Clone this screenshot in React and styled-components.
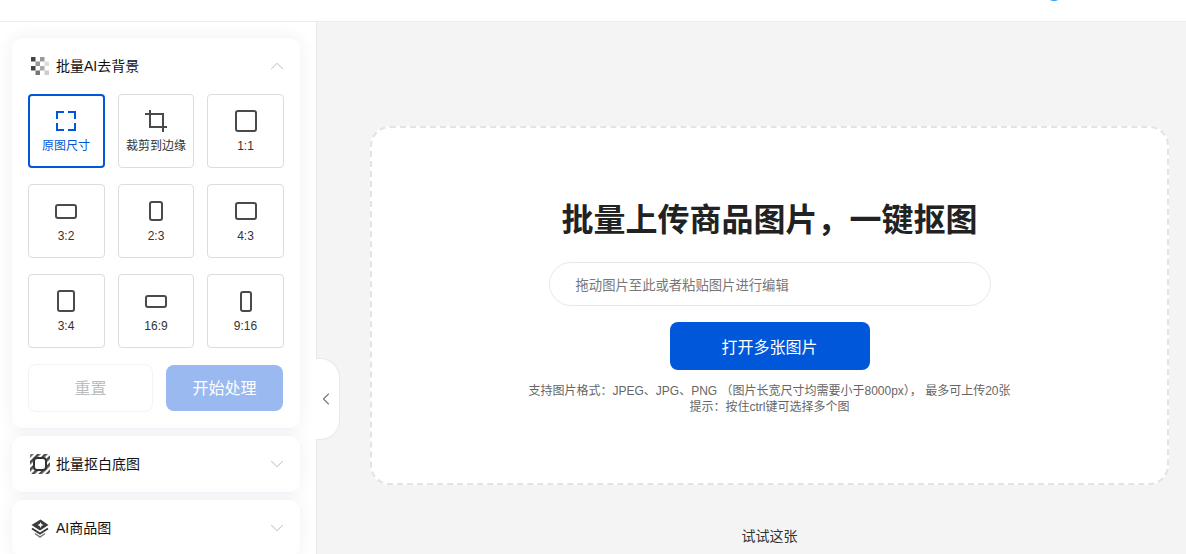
import React from 'react';
import styled, { createGlobalStyle } from 'styled-components';
import { ChevronUp, ChevronDown, ChevronLeft } from 'lucide-react';

const GlobalStyle = createGlobalStyle`
  html, body {
    margin: 0;
    height: 100%;
    overflow: hidden;
    background: #f4f4f4;
    font-family: "Liberation Sans", "Noto Sans CJK SC", sans-serif;
  }
  * { box-sizing: border-box; }
`;

const Page = styled.div`
  height: 100vh;
  display: flex;
  flex-direction: column;
  overflow: hidden;
`;

const Header = styled.header`
  height: 22px;
  flex: none;
  display: flex;
  justify-content: flex-end;
  padding-right: 123px;
  background: #fff;
  border-bottom: 1px solid #ececec;
  overflow: hidden;
`;

const Avatar = styled.span`
  width: 18px;
  height: 18px;
  margin-top: -17px;
  border-radius: 50%;
  background: #2f9bf4;
`;

const Body = styled.div`
  flex: 1;
  display: flex;
  min-height: 0;
`;

const Sidebar = styled.aside`
  position: relative;
  width: 317px;
  flex: none;
  display: flex;
  flex-direction: column;
  gap: 8px;
  padding: 16px 16px 0 12px;
  background: #fff;
  border-right: 1px solid #e9e9e9;
`;

const Card = styled.section`
  flex: none;
  background: #fff;
  border-radius: 10px;
  box-shadow: 0 0 16px rgba(40, 50, 120, 0.08);
  padding: ${(p) => (p.$open ? '0 16px 16px' : '0 16px')};
`;

const CardHead = styled.div`
  height: 56px;
  display: flex;
  align-items: center;
  gap: 6px;
  padding-left: 2px;
`;

const HeadIcon = styled.span`
  width: 20px;
  display: flex;
  justify-content: center;
`;

const CardTitle = styled.span`
  flex: 1;
  font-size: 14px;
  line-height: 20px;
  color: #111;
`;

const Arrow = styled.span`
  display: flex;
  color: #b4b4b4;
  margin-right: -4px;
`;

const Grid = styled.div`
  display: grid;
  grid-template-columns: 77px 76px 77px;
  grid-auto-rows: 74px;
  column-gap: 13px;
  row-gap: 16px;

  & > :nth-child(3n + 1) {
    padding-right: 1px;
  }
`;

const Cell = styled.div`
  display: flex;
  flex-direction: column;
  align-items: center;
  border-radius: 4px;
  border: ${(p) => (p.$active ? '2px solid #0057d9' : '1px solid #dcdcdc')};
  padding-top: ${(p) => (p.$active ? '13px' : '14px')};
  color: ${(p) => (p.$active ? '#0057d9' : '#333')};
`;

const IconSlot = styled.div`
  height: 24px;
  display: flex;
  align-items: center;
  justify-content: center;
`;

const Shape = styled.span`
  display: block;
  width: ${(p) => p.$w}px;
  height: ${(p) => p.$h}px;
  border: 2px solid #4a4a4a;
  border-radius: 3px;
`;

const CellLabel = styled.span`
  margin-top: 5px;
  font-size: 12px;
  line-height: 16px;
`;

const Actions = styled.div`
  display: flex;
  gap: 13px;
  margin-top: 16px;
`;

const ResetButton = styled.button`
  width: 125px;
  height: 48px;
  padding: 0 0 2px;
  font: inherit;
  font-size: 16px;
  color: #bdbdbd;
  background: #fff;
  border: 1px solid #f3f3f3;
  border-radius: 8px;
`;

const StartButton = styled.button`
  width: 117px;
  height: 46px;
  margin-top: 1px;
  padding: 0 0 2px;
  font: inherit;
  font-size: 16px;
  color: #fff;
  background: #99b9f0;
  border: 0;
  border-radius: 8px;
`;

const Collapse = styled.div`
  position: absolute;
  left: 316px;
  top: 336px;
  width: 24px;
  height: 82px;
  display: flex;
  align-items: center;
  justify-content: center;
  padding-right: 3px;
  background: #fff;
  border: 1px solid #e9e9e9;
  border-left: 0;
  border-radius: 0 20px 20px 0;
  color: #777;
`;

const Main = styled.main`
  flex: 1;
  display: flex;
  flex-direction: column;
  align-items: center;
  padding: 104px 17px 0 53px;
  background: #f4f4f4;
`;

const DropZone = styled.div`
  width: 100%;
  height: 359px;
  flex: none;
  display: flex;
  flex-direction: column;
  align-items: center;
  padding-top: 71px;
  background: #fff;
  border: 2px dashed #e3e3e3;
  border-radius: 20px;
`;

const Title = styled.h1`
  margin: 0;
  font-size: 32px;
  line-height: 42px;
  font-weight: 700;
  color: #222;
`;

const PasteBox = styled.div`
  width: 442px;
  height: 44px;
  margin-top: 21px;
  display: flex;
  align-items: center;
  padding-left: 26px;
  font-size: 13.33px;
  color: #777;
  border: 1px solid #e8e8e8;
  border-radius: 22px;
`;

const OpenButton = styled.button`
  width: 200px;
  height: 48px;
  margin-top: 16px;
  font: inherit;
  font-size: 16px;
  color: #fff;
  background: #0057d9;
  border: 0;
  border-radius: 8px;
`;

const Hint = styled.p`
  margin: 13px 0 0;
  font-size: 12px;
  line-height: 16px;
  text-align: center;
  color: #666;
`;

const TryLabel = styled.div`
  margin-top: 43px;
  font-size: 14px;
  line-height: 16px;
  color: #333;
`;

const CheckerIcon = () => (
  <svg width="18" height="18" viewBox="0 0 18 18">
    <rect x="0" y="0" width="4.5" height="4.5" fill="#444" />
    <rect x="9" y="0" width="4.5" height="4.5" fill="#999" />
    <rect x="4.5" y="4.5" width="4.5" height="4.5" fill="#999" />
    <rect x="13.5" y="4.5" width="4.5" height="4.5" fill="#ddd" />
    <rect x="0" y="9" width="4.5" height="4.5" fill="#444" />
    <rect x="9" y="9" width="4.5" height="4.5" fill="#aaa" />
    <rect x="4.5" y="13.5" width="4.5" height="4.5" fill="#777" />
    <rect x="13.5" y="13.5" width="4.5" height="4.5" fill="#ccc" />
  </svg>
);

const HatchIcon = () => (
  <svg width="20" height="20" viewBox="0 0 20 20">
    <defs>
      <pattern id="hatch" width="5" height="5" patternUnits="userSpaceOnUse" patternTransform="rotate(-45)">
        <rect width="5" height="2.6" fill="#4a4a4a" />
      </pattern>
    </defs>
    <rect width="20" height="20" rx="2" fill="url(#hatch)" />
    <rect x="4" y="4" width="12" height="12" rx="3" fill="#fff" stroke="#333" strokeWidth="2" />
  </svg>
);

const ProductIcon = () => (
  <svg width="18" height="19" viewBox="0 0 18 19">
    <path d="M9.500 0.500 17.500 6 9 11.500 0.500 6Z" fill="#3c3c3c" />
    <path d="M9.500 3 10.400 5.100 12.500 6 10.400 6.900 9.500 9 8.600 6.900 6.500 6 8.600 5.100Z" fill="#fff" />
    <path d="M1 9.500 9 14.500 17 9.500" fill="none" stroke="#3c3c3c" strokeWidth="2" />
    <path d="M4 14.500 9 18 14 14.500" fill="none" stroke="#777" strokeWidth="1.500" />
  </svg>
);

const FitIcon = () => (
  <svg width="20" height="20" viewBox="0 0 20 20" fill="none" stroke="#0057d9" strokeWidth="2">
    <path d="M8 1H1V8M12 1H19V8M1 12V19H8M19 12V19H12" />
  </svg>
);

const CropIcon = () => (
  <svg width="22" height="22" viewBox="0 0 22 22" fill="none" stroke="#4a4a4a" strokeWidth="2">
    <path d="M0 4H18V22" />
    <path d="M5 0V17H22" />
  </svg>
);

const ratios = [
  { label: '1:1', w: 22, h: 22 },
  { label: '3:2', w: 22, h: 15 },
  { label: '2:3', w: 14, h: 20 },
  { label: '4:3', w: 22, h: 18 },
  { label: '3:4', w: 18, h: 22 },
  { label: '16:9', w: 22, h: 13 },
  { label: '9:16', w: 12, h: 21 },
];

const App = () => (
  <Page>
    <GlobalStyle />
    <Header>
      <Avatar />
    </Header>
    <Body>
      <Sidebar>
        <Card $open>
          <CardHead>
            <HeadIcon><CheckerIcon /></HeadIcon>
            <CardTitle>批量AI去背景</CardTitle>
            <Arrow><ChevronUp size={22} strokeWidth={1} /></Arrow>
          </CardHead>
          <Grid>
            <Cell $active>
              <IconSlot><FitIcon /></IconSlot>
              <CellLabel>原图尺寸</CellLabel>
            </Cell>
            <Cell>
              <IconSlot><CropIcon /></IconSlot>
              <CellLabel>裁剪到边缘</CellLabel>
            </Cell>
            {ratios.map((r) => (
              <Cell key={r.label}>
                <IconSlot><Shape $w={r.w} $h={r.h} /></IconSlot>
                <CellLabel>{r.label}</CellLabel>
              </Cell>
            ))}
          </Grid>
          <Actions>
            <ResetButton>重置</ResetButton>
            <StartButton>开始处理</StartButton>
          </Actions>
        </Card>
        <Card>
          <CardHead>
            <HeadIcon><HatchIcon /></HeadIcon>
            <CardTitle>批量抠白底图</CardTitle>
            <Arrow><ChevronDown size={22} strokeWidth={1} /></Arrow>
          </CardHead>
        </Card>
        <Card>
          <CardHead>
            <HeadIcon><ProductIcon /></HeadIcon>
            <CardTitle>AI商品图</CardTitle>
            <Arrow><ChevronDown size={22} strokeWidth={1} /></Arrow>
          </CardHead>
        </Card>
        <Collapse>
          <ChevronLeft size={30} strokeWidth={1.3} />
        </Collapse>
      </Sidebar>
      <Main>
        <DropZone>
          <Title>批量上传商品图片，一键抠图</Title>
          <PasteBox>拖动图片至此或者粘贴图片进行编辑</PasteBox>
          <OpenButton>打开多张图片</OpenButton>
          <Hint>
            支持图片格式：JPEG、JPG、PNG （图片长宽尺寸均需要小于8000px）， 最多可上传20张
            <br />
            提示：按住ctrl键可选择多个图
          </Hint>
        </DropZone>
        <TryLabel>试试这张</TryLabel>
      </Main>
    </Body>
  </Page>
);

export default App;
